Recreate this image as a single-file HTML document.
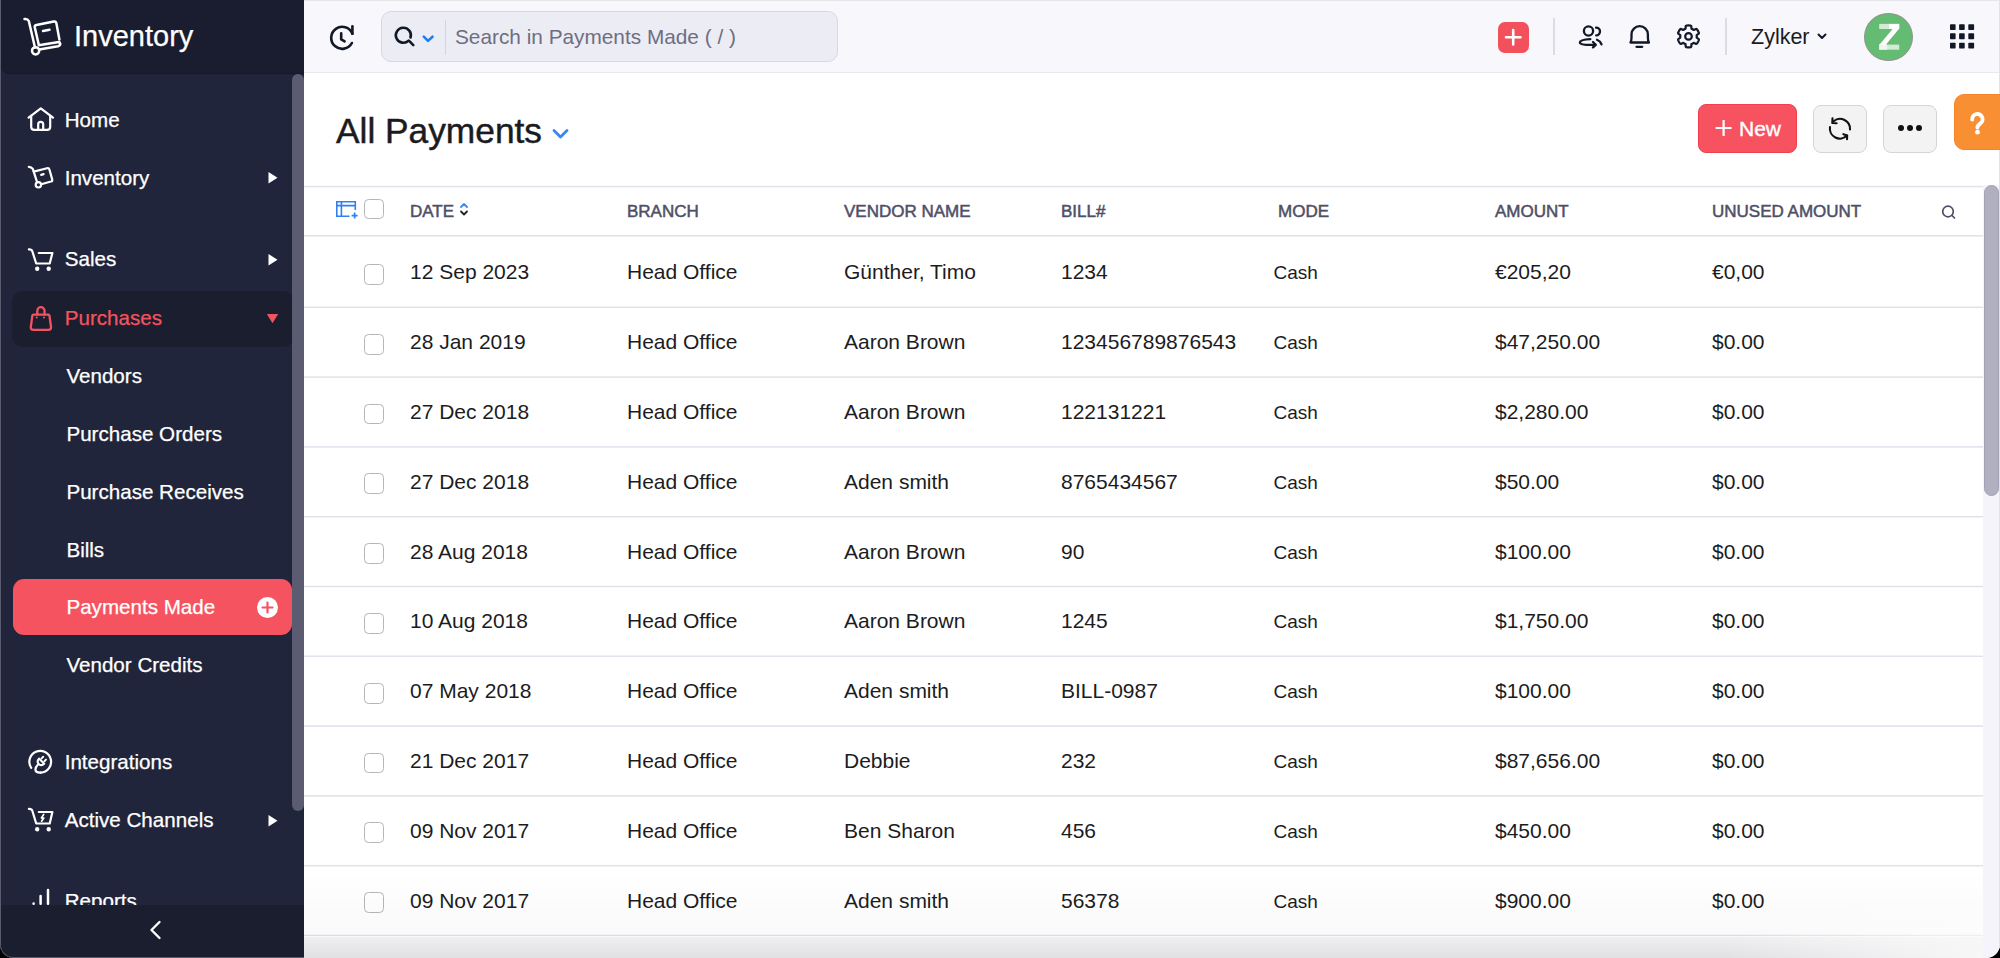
<!DOCTYPE html>
<html><head><meta charset="utf-8">
<style>
*{margin:0;padding:0;box-sizing:border-box}
html,body{width:2000px;height:958px;overflow:hidden;background:#000;font-family:"Liberation Sans",sans-serif}
.abs{position:absolute}
#win{position:absolute;left:0;top:0;width:2000px;height:958px;border-radius:0 0 14px 14px;overflow:hidden;background:#fff}
/* sidebar */
#side{position:absolute;left:0;top:0;width:304px;height:958px;background:#21253b;border-bottom-left-radius:13px;overflow:hidden}
#frame{position:absolute;left:0;top:-20px;width:320px;height:978px;border-left:1.5px solid #5a5b6e;border-bottom:1.5px solid #5a5b6e;border-bottom-left-radius:13px;pointer-events:none}
#sidehead{position:absolute;left:0;top:0;width:304px;height:73px;background:#1a1d2f;border-bottom-left-radius:10px;box-shadow:0 0.5px 1px rgba(0,0,0,0.35)}
.si{position:absolute;left:64.7px;height:30px;line-height:30px;font-size:20.6px;color:#fff;white-space:nowrap;-webkit-text-stroke:0.25px currentColor}
.sub{left:66.4px}
.tri{position:absolute;width:0;height:0}
#sfoot{position:absolute;left:0;top:905px;width:304px;height:53px;background:#1b1e2f}
#sscroll{position:absolute;left:292px;top:73.5px;width:11.5px;height:737px;background:#5b5c72;border-radius:6px}
/* topbar */
#top{position:absolute;left:304px;top:0;width:1696px;height:73px;background:#f7f7fc;border-top:1.5px solid #e6e6ea;border-bottom:1.5px solid #e8e8ef}
#search{position:absolute;left:381px;top:11px;width:457px;height:51px;background:#ececf4;border:1px solid #d8d8e2;border-radius:10px}
.txt{position:absolute;white-space:nowrap;line-height:30px;height:30px}
/* table */
.hline{position:absolute;left:304px;width:1679px;height:1.5px;background:#e6e6f0}
.hd{position:absolute;top:197px;height:30px;line-height:30px;font-size:17px;color:#4f4f66;white-space:nowrap;-webkit-text-stroke:0.5px #4f4f66;letter-spacing:0}
.cell{position:absolute;height:30px;line-height:30px;font-size:21px;color:#1c1c1e;white-space:nowrap}
.cb{position:absolute;left:364.2px;width:20.2px;height:20.8px;border:1.5px solid #b6b6ba;border-radius:4.5px;background:#fff}
.btn{position:absolute;top:104.5px;height:48.5px;border-radius:8px}
</style></head>
<body>
<div id="win">

<!-- ============ SIDEBAR ============ -->
<div id="side">
  <div id="sidehead"></div>
  <div class="si" style="left:74px;top:21px;height:30px;line-height:30px;font-size:29px">Inventory</div>
  <div class="abs" style="left:12px;top:291px;width:282px;height:55.5px;background:#1b1e2f;border-radius:11px"></div>
  <div class="abs" style="left:13px;top:579px;width:279px;height:55.5px;background:#f5535f;border-radius:11px"></div>
  <div class="abs" style="left:257px;top:597px;width:21px;height:21px;border-radius:50%;background:#fff"></div>

  <div class="si" style="top:104.7px">Home</div>
  <div class="si" style="top:162.7px">Inventory</div>
  <div class="si" style="top:244.4px">Sales</div>
  <div class="si" style="top:303.3px;color:#f2545f">Purchases</div>
  <div class="si sub" style="top:361px">Vendors</div>
  <div class="si sub" style="top:419px">Purchase Orders</div>
  <div class="si sub" style="top:477px">Purchase Receives</div>
  <div class="si sub" style="top:535px">Bills</div>
  <div class="si sub" style="top:592px">Payments Made</div>
  <div class="si sub" style="top:650px">Vendor Credits</div>
  <div class="si" style="top:747px">Integrations</div>
  <div class="si" style="top:805px">Active Channels</div>
  <div class="si" style="top:886px">Reports</div>

  <svg class="abs" style="left:0;top:0" width="304" height="958" viewBox="0 0 304 958" fill="none" stroke="#fff" stroke-width="2.2" stroke-linecap="round" stroke-linejoin="round">
    <!-- logo -->
    <g stroke-width="2.5">
    <path d="M24.5 19 Q27.5 18.5 28.8 21 L35 47.5"/>
    <circle cx="35.6" cy="50.8" r="3.6"/>
    <path d="M39.2 49.6 L58 46.2 Q60.6 45.6 60.2 43.6 Q59.8 41.8 57.4 42.2 L38.8 45.2"/>
    <path d="M38.6 44 L34.8 27.5 Q34.4 25.4 36.4 25 L53.8 21.6 Q56 21.2 56.4 23.4 L59.4 39.4"/>
    <path d="M43 31 L49.5 29.8"/>
    </g>
    <!-- home -->
    <path d="M28.6 117.6 L40.8 108.4 L53 117.6"/>
    <path d="M31.2 115.8 V126.8 Q31.2 129.9 34.3 129.9 H47.1 Q50.2 129.9 50.2 126.8 V115.8"/>
    <path d="M38.2 129.9 V124.2 Q38.2 121.8 40.7 121.8 Q43.2 121.8 43.2 124.2 V129.9"/>
    <!-- inventory -->
    <path d="M28.8 166.9 Q31.5 167 32.8 168.8 L37 181.8"/>
    <circle cx="38.4" cy="184.8" r="2.7"/>
    <path d="M33.8 171.6 L47 168.2 Q48.9 167.7 49.4 169.5 L52.2 179.4 Q52.6 181 51 181.5 L41.2 184.2"/>
    <path d="M41.2 174.9 L43.6 174.1"/>
    <!-- sales cart -->
    <path d="M28.9 249.4 Q31.6 249.2 32.4 251.5 L36.2 263.5 H49.7 L52.4 253 H38.8"/>
    <circle cx="37.2" cy="268.7" r="1.3" fill="#fff" stroke-width="1.8"/>
    <circle cx="48.7" cy="268.7" r="1.3" fill="#fff" stroke-width="1.8"/>
    <!-- purchases bag -->
    <g stroke="#f2545f" stroke-width="2.3">
    <path d="M33.6 314.6 H48.2 Q49.3 314.6 49.5 315.8 L51 327 Q51.2 329.8 48.4 329.8 H33.4 Q30.6 329.8 30.8 327 L32.3 315.8 Q32.5 314.6 33.6 314.6 Z"/>
    <path d="M37.3 314.4 V310.8 A3.6 3.6 0 0 1 44.5 310.8 V314.4"/>
    </g>
    <circle cx="36.7" cy="317.4" r="1" fill="#f2545f" stroke="none"/>
    <circle cx="44" cy="317.4" r="1" fill="#f2545f" stroke="none"/>
    <!-- integrations -->
    <path d="M31.2 767.8 A10.85 10.85 0 1 1 40.7 772.6"/>
    <path d="M40.7 772.6 Q35.6 772.8 35.4 769.6 Q35.4 767 38.2 764.2"/>
    <path d="M39 758.6 L44.2 763.8 Q41.4 766.4 38.8 763.9 Q36.4 761.4 39 758.6 Z" stroke-width="2.1"/>
    <path d="M41.6 758.4 L43.2 756.8 M44.4 761.2 L46 759.6" stroke-width="2"/>
    <!-- active channels -->
    <path d="M28.9 808.9 Q31.6 808.7 32.4 811 L36.2 823.5 H49.7 L52.4 812 H38.8"/>
    <path d="M43.7 814.4 L41.4 818 H43.8 L41.6 821.2" stroke-width="1.7"/>
    <circle cx="37.2" cy="829.2" r="1.3" fill="#fff" stroke-width="1.8"/>
    <circle cx="48.7" cy="829.2" r="1.3" fill="#fff" stroke-width="1.8"/>
    <!-- reports -->
    <path d="M33.6 903.5 V903.8 M40.6 896 V903.8 M48 890 V903.8" stroke-width="2.5"/>
    <!-- arrows -->
    <path d="M268.5 254 L277.5 259.7 L268.5 265.4 Z M268.5 172 L277.5 177.7 L268.5 183.4 Z M268.5 815 L277.5 820.7 L268.5 826.4 Z" fill="#fff" stroke="none"/>
    <path d="M266.8 314 H278.2 L272.5 323.2 Z" fill="#f2545f" stroke="none"/>
    <!-- payments plus -->
    <path d="M267.5 602.5 V612.5 M262.5 607.5 H272.5" stroke="#f5535f" stroke-width="2.2"/>
  </svg>

  <div id="sfoot"></div>
  <svg class="abs" style="left:140px;top:915px" width="30" height="30" viewBox="0 0 30 30" fill="none" stroke="#fff" stroke-width="2.4" stroke-linecap="round" stroke-linejoin="round"><path d="M19.5 7 L11.5 15 L19.5 23"/></svg>
  <div id="sscroll"></div>
</div>
<div id="frame"></div>

<!-- ============ TOPBAR ============ -->
<div id="top"></div>
<div id="search"></div>
<div class="abs" style="left:444.5px;top:20px;width:1px;height:35px;background:#d4d4de"></div>
<div class="txt" style="left:455px;top:21.5px;font-size:20.8px;color:#6e6e82">Search in Payments Made ( / )</div>
<div class="abs" style="left:1498px;top:22px;width:30.5px;height:30.5px;background:#f2505d;border-radius:7px"></div>
<div class="abs" style="left:1553px;top:18px;width:1.5px;height:37px;background:#dcdce4"></div>
<div class="abs" style="left:1725px;top:18px;width:1.5px;height:37px;background:#dcdce4"></div>
<div class="txt" style="left:1751px;top:21.5px;font-size:21.5px;color:#1b1b1f">Zylker</div>
<div class="abs" style="left:1864px;top:12.5px;width:49px;height:48.5px;border-radius:50%;background:#64bb72;border:1.3px solid #8f958f"></div>
<svg class="abs" style="left:0;top:0" width="2000" height="73" viewBox="0 0 2000 73" stroke="none">
  <rect x="1879.2" y="23.9" width="20" height="5.1" fill="#d3ebd5"/>
  <rect x="1889" y="23.9" width="10.2" height="5.1" fill="#fff"/>
  <rect x="1879.2" y="44.6" width="20" height="5.1" fill="#d3ebd5"/>
  <rect x="1879.2" y="44.6" width="8" height="5.1" fill="#f2f2f2"/>
  <path d="M1893 28.6 H1899.2 L1885.6 44.9 H1879.2 Z" fill="#fff"/>
</svg>
<svg class="abs" style="left:0;top:0" width="2000" height="73" viewBox="0 0 2000 73" fill="none" stroke="#111827" stroke-width="2.4" stroke-linecap="round" stroke-linejoin="round">
  <!-- history -->
  <g stroke-width="2.6"><path d="M352.4 33.7 A11 11 0 1 0 351.9 43"/>
  <path d="M352.4 26.2 V33.7"/>
  <path d="M341.2 33.4 V39.3 L344.6 41.4"/></g>
  <!-- search -->
  <g stroke-width="2.6"><path d="M408.6 40.6 A7.5 7.5 0 1 1 410.5 37.5"/>
  <path d="M409.4 41.2 L413.3 45.1"/></g>
  <path d="M423.8 36.7 L428 40.9 L432.5 36.7" stroke="#1a7ef5" stroke-width="2.6"/>
  <!-- red plus -->
  <path d="M1513.2 30 V44.5 M1506 37.2 H1520.5" stroke="#fff" stroke-width="2.6"/>
  <!-- users -->
  <circle cx="1588.5" cy="31" r="4.6" stroke-width="2.3"/>
  <path d="M1596 27.6 A3.6 3.6 0 0 1 1596.2 35.4" stroke-width="2.3"/>
  <path d="M1590.3 39.1 Q1580 39.6 1579.8 42.6 Q1580 45.3 1594.5 44.9" stroke-width="2.3"/>
  <path d="M1593 42 L1595.8 44.8 L1593 47.4" stroke-width="2.3"/>
  <path d="M1597 39.8 Q1600.5 41.3 1601.5 44.3" stroke-width="2.3"/>
  <!-- bell -->
  <path d="M1630.5 42.5 Q1631.5 41 1631.5 37.5 V34.3 A8.2 8.1 0 0 1 1647.9 34.3 V37.5 Q1647.9 41 1648.9 42.5 Z" stroke-width="2.3"/>
  <path d="M1636.5 46.8 H1642.2" stroke-width="2.3"/>
  <!-- gear -->
  <path d="M1688.50 25.45 L1689.07 25.47 L1689.64 25.51 L1690.21 25.58 L1690.78 25.69 L1691.25 26.15 L1691.39 27.50 L1691.46 28.70 L1691.86 28.86 L1692.25 29.05 L1692.62 29.26 L1692.99 29.48 L1693.35 29.73 L1693.69 29.99 L1694.76 29.44 L1696.00 28.90 L1696.64 29.07 L1697.01 29.51 L1697.36 29.96 L1697.68 30.44 L1697.98 30.92 L1698.26 31.43 L1698.50 31.95 L1698.72 32.48 L1698.91 33.02 L1698.75 33.65 L1697.66 34.45 L1696.65 35.11 L1696.70 35.54 L1696.74 35.97 L1696.75 36.40 L1696.74 36.83 L1696.70 37.26 L1696.65 37.69 L1697.66 38.35 L1698.75 39.15 L1698.91 39.78 L1698.72 40.32 L1698.50 40.85 L1698.26 41.37 L1697.98 41.87 L1697.68 42.36 L1697.36 42.84 L1697.01 43.29 L1696.64 43.73 L1696.00 43.90 L1694.76 43.36 L1693.69 42.81 L1693.35 43.07 L1692.99 43.32 L1692.62 43.54 L1692.25 43.75 L1691.86 43.94 L1691.46 44.10 L1691.39 45.30 L1691.25 46.65 L1690.78 47.11 L1690.21 47.22 L1689.64 47.29 L1689.07 47.33 L1688.50 47.35 L1687.93 47.33 L1687.36 47.29 L1686.79 47.22 L1686.22 47.11 L1685.75 46.65 L1685.61 45.30 L1685.54 44.10 L1685.14 43.94 L1684.75 43.75 L1684.38 43.54 L1684.01 43.32 L1683.65 43.07 L1683.31 42.81 L1682.24 43.36 L1681.00 43.90 L1680.36 43.73 L1679.99 43.29 L1679.64 42.84 L1679.32 42.36 L1679.02 41.88 L1678.74 41.37 L1678.50 40.85 L1678.28 40.32 L1678.09 39.78 L1678.25 39.15 L1679.34 38.35 L1680.35 37.69 L1680.30 37.26 L1680.26 36.83 L1680.25 36.40 L1680.26 35.97 L1680.30 35.54 L1680.35 35.11 L1679.34 34.45 L1678.25 33.65 L1678.09 33.02 L1678.28 32.48 L1678.50 31.95 L1678.74 31.43 L1679.02 30.92 L1679.32 30.44 L1679.64 29.96 L1679.99 29.51 L1680.36 29.07 L1681.00 28.90 L1682.24 29.44 L1683.31 29.99 L1683.65 29.73 L1684.01 29.48 L1684.38 29.26 L1684.75 29.05 L1685.14 28.86 L1685.54 28.70 L1685.61 27.50 L1685.75 26.15 L1686.22 25.69 L1686.79 25.58 L1687.36 25.51 L1687.93 25.47 Z" stroke-width="2.2"/>
  <circle cx="1688.5" cy="36.4" r="3.3" stroke-width="2.2"/>
  <!-- zylker chevron -->
  <path d="M1818.5 34.5 L1822 38 L1825.5 34.5" stroke-width="2"/>
  <!-- grid -->
  <g fill="#111827" stroke="none">
  <rect x="1950" y="24.2" width="5.6" height="5.8" rx="0.7"/><rect x="1959.1" y="24.2" width="5.6" height="5.8" rx="0.7"/><rect x="1968.3" y="24.2" width="5.8" height="5.8" rx="0.7"/>
  <rect x="1950" y="33.3" width="5.6" height="6" rx="0.7"/><rect x="1959.1" y="33.3" width="5.6" height="6" rx="0.7"/><rect x="1968.3" y="33.3" width="5.8" height="6" rx="0.7"/>
  <rect x="1950" y="42.8" width="5.6" height="5.7" rx="0.7"/><rect x="1959.1" y="42.8" width="5.6" height="5.7" rx="0.7"/><rect x="1968.3" y="42.8" width="5.8" height="5.7" rx="0.7"/>
  </g>
</svg>

<!-- ============ CONTENT ============ -->
<div class="txt" style="left:336px;top:113px;height:36px;line-height:36px;font-size:35.3px;color:#1b1b1f;-webkit-text-stroke:0.45px #1b1b1f">All Payments</div>
<svg class="abs" style="left:551px;top:125px" width="20" height="18" viewBox="0 0 20 18" fill="none" stroke="#3a86f7" stroke-width="2.8" stroke-linecap="round" stroke-linejoin="round"><path d="M3 5.5 L9.5 12 L16 5.5"/></svg>

<div class="btn" style="left:1698px;top:104.2px;width:99px;background:#f6525f;border:1px solid #f03f4d"></div>
<svg class="abs" style="left:1700px;top:105px" width="50" height="46" viewBox="1700 105 50 46" stroke="#fff" stroke-width="2.2" stroke-linecap="butt"><path d="M1723.6 120 V136 M1715.6 128 H1731.6"/></svg>
<div class="txt" style="left:1739px;top:113.5px;font-size:21px;color:#fff;-webkit-text-stroke:0.4px #fff">New</div>
<div class="btn" style="left:1813px;width:54px;background:#f3f3f3;border:1.5px solid #d5d5d5"></div>
<svg class="abs" style="left:1815px;top:105px" width="50" height="47" viewBox="0 0 50 47" fill="none" stroke="#111" stroke-width="2.1" stroke-linecap="round" stroke-linejoin="round">
  <path d="M18.6 16.2 A10 10 0 0 1 35 24.5"/><path d="M15 22 A10 10 0 0 0 32 30.6"/>
  <path d="M17.5 13.2 L17.3 18 L21.6 18.2"/><path d="M28.4 29.2 L32.2 30.4 L32 34.2"/>
</svg>
<div class="btn" style="left:1883px;width:54px;background:#f3f3f3;border:1.5px solid #d5d5d5"></div>
<svg class="abs" style="left:1896px;top:121px" width="28" height="14" viewBox="0 0 28 14" fill="#111"><circle cx="5" cy="7" r="3"/><circle cx="14" cy="7" r="3"/><circle cx="23" cy="7" r="3"/></svg>


<!-- table header -->
<svg class="abs" style="left:335px;top:200px" width="24" height="20" viewBox="0 0 24 20" fill="none" stroke="#2f7ff5" stroke-width="1.6">
  <path d="M20.3 10 V1.8 H1.8 V16.2 H14.5"/><path d="M1.8 5.6 H20.3 M6.4 1.8 V16.2"/>
  <path d="M19.6 12.6 V18.6 M16.6 15.6 H22.6" stroke-width="1.7"/>
</svg>
<div class="cb" style="top:198.5px"></div>
<div class="hd" style="left:410px">DATE</div>
<svg class="abs" style="left:458px;top:201px" width="12" height="16" viewBox="0 0 12 16" fill="none" stroke-width="1.8" stroke-linecap="round" stroke-linejoin="round"><path d="M3 6 L6 3 L9 6" stroke="#3a86f7"/><path d="M3 10.5 L6 13.5 L9 10.5" stroke="#222"/></svg>
<div class="hd" style="left:627px">BRANCH</div>
<div class="hd" style="left:844px">VENDOR NAME</div>
<div class="hd" style="left:1061px">BILL#</div>
<div class="hd" style="left:1278px">MODE</div>
<div class="hd" style="left:1495px">AMOUNT</div>
<div class="hd" style="left:1712px">UNUSED AMOUNT</div>
<svg class="abs" style="left:1940px;top:203px" width="18" height="18" viewBox="0 0 18 18" fill="none" stroke="#4f4f66" stroke-width="1.7" stroke-linecap="round"><circle cx="8" cy="8.5" r="5.3"/><path d="M12 12.5 L14.5 15"/></svg>

<div id="rows">
<svg class="abs" style="left:0;top:0" width="2000" height="958" viewBox="0 0 2000 958"><rect x="304" y="185.85" width="1679" height="1.5" fill="#e2e1ec"/><rect x="304" y="235.05" width="1679" height="1.5" fill="#e2e1ec"/><rect x="304" y="306.55" width="1679" height="1.5" fill="#e2e1ec"/><rect x="304" y="376.35" width="1679" height="1.5" fill="#e2e1ec"/><rect x="304" y="446.15" width="1679" height="1.5" fill="#e2e1ec"/><rect x="304" y="515.95" width="1679" height="1.5" fill="#e2e1ec"/><rect x="304" y="585.75" width="1679" height="1.5" fill="#e2e1ec"/><rect x="304" y="655.55" width="1679" height="1.5" fill="#e2e1ec"/><rect x="304" y="725.35" width="1679" height="1.5" fill="#e2e1ec"/><rect x="304" y="795.15" width="1679" height="1.5" fill="#e2e1ec"/><rect x="304" y="864.95" width="1679" height="1.5" fill="#e2e1ec"/><rect x="304" y="934.75" width="1679" height="1.5" fill="#e2e1ec"/></svg>
<div class="cb" style="top:263.95px"></div>
<div class="cell" style="left:410px;top:257.40px">12 Sep 2023</div>
<div class="cell" style="left:627px;top:257.40px">Head Office</div>
<div class="cell" style="left:844px;top:257.40px">Günther, Timo</div>
<div class="cell" style="left:1061px;top:257.40px">1234</div>
<div class="cell" style="left:1273.5px;top:258.40px;font-size:19px">Cash</div>
<div class="cell" style="left:1495px;top:257.40px">€205,20</div>
<div class="cell" style="left:1712px;top:257.40px">€0,00</div>
<div class="cb" style="top:333.75px"></div>
<div class="cell" style="left:410px;top:327.20px">28 Jan 2019</div>
<div class="cell" style="left:627px;top:327.20px">Head Office</div>
<div class="cell" style="left:844px;top:327.20px">Aaron Brown</div>
<div class="cell" style="left:1061px;top:327.20px">123456789876543</div>
<div class="cell" style="left:1273.5px;top:328.20px;font-size:19px">Cash</div>
<div class="cell" style="left:1495px;top:327.20px">$47,250.00</div>
<div class="cell" style="left:1712px;top:327.20px">$0.00</div>
<div class="cb" style="top:403.55px"></div>
<div class="cell" style="left:410px;top:397.00px">27 Dec 2018</div>
<div class="cell" style="left:627px;top:397.00px">Head Office</div>
<div class="cell" style="left:844px;top:397.00px">Aaron Brown</div>
<div class="cell" style="left:1061px;top:397.00px">122131221</div>
<div class="cell" style="left:1273.5px;top:398.00px;font-size:19px">Cash</div>
<div class="cell" style="left:1495px;top:397.00px">$2,280.00</div>
<div class="cell" style="left:1712px;top:397.00px">$0.00</div>
<div class="cb" style="top:473.35px"></div>
<div class="cell" style="left:410px;top:466.80px">27 Dec 2018</div>
<div class="cell" style="left:627px;top:466.80px">Head Office</div>
<div class="cell" style="left:844px;top:466.80px">Aden smith</div>
<div class="cell" style="left:1061px;top:466.80px">8765434567</div>
<div class="cell" style="left:1273.5px;top:467.80px;font-size:19px">Cash</div>
<div class="cell" style="left:1495px;top:466.80px">$50.00</div>
<div class="cell" style="left:1712px;top:466.80px">$0.00</div>
<div class="cb" style="top:543.15px"></div>
<div class="cell" style="left:410px;top:536.60px">28 Aug 2018</div>
<div class="cell" style="left:627px;top:536.60px">Head Office</div>
<div class="cell" style="left:844px;top:536.60px">Aaron Brown</div>
<div class="cell" style="left:1061px;top:536.60px">90</div>
<div class="cell" style="left:1273.5px;top:537.60px;font-size:19px">Cash</div>
<div class="cell" style="left:1495px;top:536.60px">$100.00</div>
<div class="cell" style="left:1712px;top:536.60px">$0.00</div>
<div class="cb" style="top:612.95px"></div>
<div class="cell" style="left:410px;top:606.40px">10 Aug 2018</div>
<div class="cell" style="left:627px;top:606.40px">Head Office</div>
<div class="cell" style="left:844px;top:606.40px">Aaron Brown</div>
<div class="cell" style="left:1061px;top:606.40px">1245</div>
<div class="cell" style="left:1273.5px;top:607.40px;font-size:19px">Cash</div>
<div class="cell" style="left:1495px;top:606.40px">$1,750.00</div>
<div class="cell" style="left:1712px;top:606.40px">$0.00</div>
<div class="cb" style="top:682.75px"></div>
<div class="cell" style="left:410px;top:676.20px">07 May 2018</div>
<div class="cell" style="left:627px;top:676.20px">Head Office</div>
<div class="cell" style="left:844px;top:676.20px">Aden smith</div>
<div class="cell" style="left:1061px;top:676.20px">BILL-0987</div>
<div class="cell" style="left:1273.5px;top:677.20px;font-size:19px">Cash</div>
<div class="cell" style="left:1495px;top:676.20px">$100.00</div>
<div class="cell" style="left:1712px;top:676.20px">$0.00</div>
<div class="cb" style="top:752.55px"></div>
<div class="cell" style="left:410px;top:746.00px">21 Dec 2017</div>
<div class="cell" style="left:627px;top:746.00px">Head Office</div>
<div class="cell" style="left:844px;top:746.00px">Debbie</div>
<div class="cell" style="left:1061px;top:746.00px">232</div>
<div class="cell" style="left:1273.5px;top:747.00px;font-size:19px">Cash</div>
<div class="cell" style="left:1495px;top:746.00px">$87,656.00</div>
<div class="cell" style="left:1712px;top:746.00px">$0.00</div>
<div class="cb" style="top:822.35px"></div>
<div class="cell" style="left:410px;top:815.80px">09 Nov 2017</div>
<div class="cell" style="left:627px;top:815.80px">Head Office</div>
<div class="cell" style="left:844px;top:815.80px">Ben Sharon</div>
<div class="cell" style="left:1061px;top:815.80px">456</div>
<div class="cell" style="left:1273.5px;top:816.80px;font-size:19px">Cash</div>
<div class="cell" style="left:1495px;top:815.80px">$450.00</div>
<div class="cell" style="left:1712px;top:815.80px">$0.00</div>
<div class="cb" style="top:892.15px"></div>
<div class="cell" style="left:410px;top:885.60px">09 Nov 2017</div>
<div class="cell" style="left:627px;top:885.60px">Head Office</div>
<div class="cell" style="left:844px;top:885.60px">Aden smith</div>
<div class="cell" style="left:1061px;top:885.60px">56378</div>
<div class="cell" style="left:1273.5px;top:886.60px;font-size:19px">Cash</div>
<div class="cell" style="left:1495px;top:885.60px">$900.00</div>
<div class="cell" style="left:1712px;top:885.60px">$0.00</div>
</div>

<!-- table scrollbar -->
<div class="abs" style="left:1983px;top:185px;width:17px;height:773px;background:#f4f4fa"></div>
<div class="abs" style="left:1983.5px;top:184.5px;width:15px;height:311px;background:#b1b0c1;border:1px solid #a3a2b4;border-radius:8px"></div>
<div class="abs" style="left:1998.5px;top:0px;width:1.5px;height:958px;background:#e2e2e8"></div>

<div class="abs" style="left:1954.3px;top:94.4px;width:60px;height:55.8px;background:#f88f32;border:1.2px solid #f8842a;border-radius:10px"></div>
<svg class="abs" style="left:1954px;top:94px" width="46" height="56" viewBox="1954 94 46 56" fill="none" stroke="#fff" stroke-width="3.9" stroke-linecap="round">
  <path d="M1972.2 119.6 A5.2 5.2 0 1 1 1980.2 123.6 Q1977.4 125.6 1977.4 127.6"/>
  <circle cx="1977.5" cy="132.2" r="2.4" fill="#fff" stroke="none"/>
</svg>
<!-- bottom shade -->
<div class="abs" style="left:304px;top:870px;width:1679px;height:66px;background:linear-gradient(to bottom,rgba(0,0,0,0),rgba(0,0,0,0.025))"></div>
<div class="abs" style="left:304px;top:936.5px;width:1679px;height:22px;background:linear-gradient(to bottom,#efeff1,#e0e0e3)"></div>
<div class="abs" style="left:1700px;top:900px;width:283px;height:58px;background:radial-gradient(ellipse 260px 70px at 100% 100%,rgba(255,255,255,0.75),rgba(255,255,255,0))"></div>

</div>
</body></html>
